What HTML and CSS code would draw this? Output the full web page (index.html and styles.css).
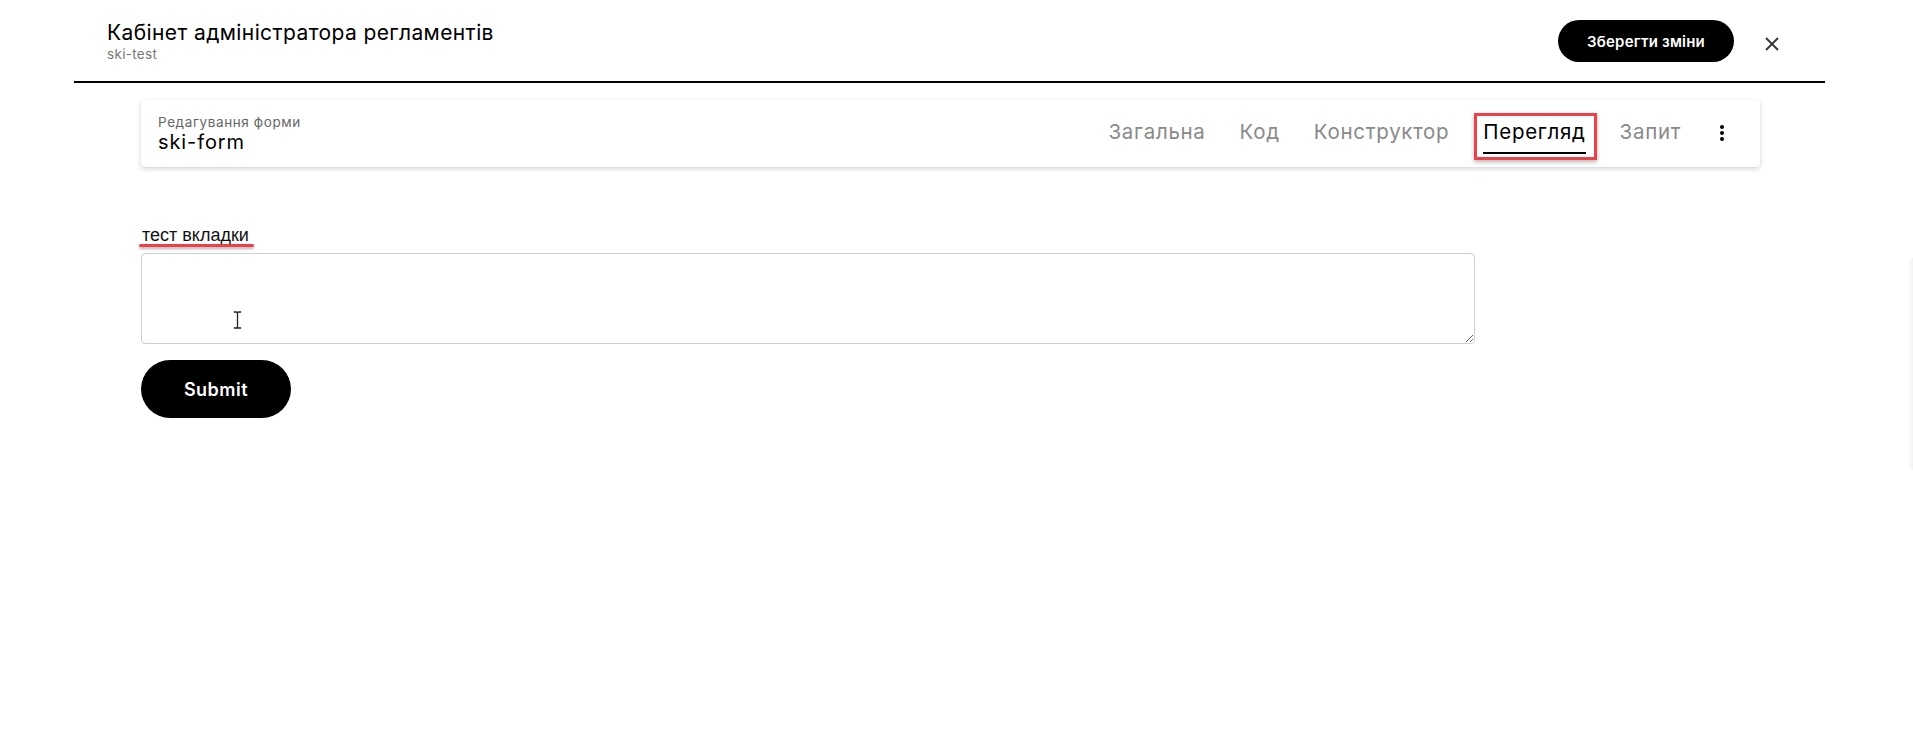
FILE: index.html
```html
<!DOCTYPE html>
<html lang="uk">
<head>
<meta charset="utf-8">
<title>Кабінет адміністратора регламентів</title>
<link rel="stylesheet" href="styles.css">
</head>
<body>
<div class="page">
  <header class="topbar">
    <div class="titles">
      <h1 class="app-title">Кабінет адміністратора регламентів</h1>
      <div class="app-sub">ski-test</div>
    </div>
    <div class="actions">
      <button class="btn-save" type="button">Зберегти зміни</button>
      <button class="btn-close" type="button" aria-label="Закрити">
        <svg width="14" height="14" viewBox="0 0 14 14"><path d="M1 1L13 13M13 1L1 13" stroke="#333" stroke-width="1.8" fill="none"/></svg>
      </button>
    </div>
  </header>

  <main class="main">
    <div class="card">
      <div class="card-titles">
        <div class="card-sub">Редагування форми</div>
        <div class="card-title">ski-form</div>
      </div>
      <nav class="tabs">
        <a class="tab">Загальна</a>
        <a class="tab">Код</a>
        <a class="tab">Конструктор</a>
        <a class="tab active">Перегляд<span class="mark-box"></span></a>
        <a class="tab">Запит</a>
        <button class="kebab" type="button" aria-label="Більше">
          <svg width="4" height="16" viewBox="0 0 4 16"><circle cx="2" cy="2" r="2"/><circle cx="2" cy="8" r="2"/><circle cx="2" cy="14" r="2"/></svg>
        </button>
      </nav>
    </div>

    <form class="form">
      <label class="field-label" for="f1">тест вкладки<span class="mark-line"></span></label>
      <div class="ta-wrap">
        <textarea id="f1" class="field-ta"></textarea>
        <svg class="ibeam" width="9" height="18" viewBox="0 0 9 18"><path d="M0.8 1H3.2Q4.5 1 4.5 2.3V15.7Q4.5 17 3.2 17H0.8M8.2 1H5.8Q4.5 1 4.5 2.3M4.5 15.7Q4.5 17 5.8 17H8.2" stroke="#222" stroke-width="1.3" fill="none"/></svg>
      </div>
      <button class="btn-submit" type="button">Submit</button>
    </form>
  </main>
  <div class="edge-strip"></div>
</div>
</body>
</html>
```

FILE: styles.css
```css
* { box-sizing: border-box; }
html, body { margin: 0; padding: 0; background: #fff; }
body { font-family: Inter, "Noto Sans", sans-serif; color: #000; }

.page { position: relative; width: 1913px; height: 748px; overflow: hidden; }

.topbar {
  display: flex;
  justify-content: space-between;
  align-items: flex-start;
  margin: 0 88px 0 74px;
  height: 83px;
  padding: 20px 41px 0 33px;
  border-bottom: 2px solid #000;
}
.app-title {
  margin: 0;
  font-size: 21px;
  line-height: 26px;
  font-weight: 400;
  letter-spacing: 0.4px;
  color: #000;
}
.app-sub {
  font-size: 13.5px;
  line-height: 16px;
  letter-spacing: 0.3px;
  color: #777;
}
.actions { display: flex; align-items: center; gap: 26px; }
.btn-save {
  height: 42px;
  width: 176px;
  border: 0;
  border-radius: 21px;
  background: #000;
  color: #fff;
  font-family: Inter, sans-serif;
  font-size: 15px;
  font-weight: 600;
  letter-spacing: 0.2px;
  cursor: pointer;
}
.btn-close {
  width: 24px; height: 24px;
  margin-top: 5px;
  padding: 0; border: 0; background: none;
  display: flex; align-items: center; justify-content: center;
}

.main { margin: 17px 153px 0 141px; }

.card {
  display: flex;
  justify-content: space-between;
  align-items: flex-start;
  height: 67px;
  padding: 15px 26px 0 17px;
  background: #fff;
  border-radius: 4px;
  box-shadow: 0 2px 5px rgba(0,0,0,0.16), 0 0 2px rgba(0,0,0,0.06);
}
.card-sub { font-size: 13.5px; line-height: 14px; letter-spacing: 0.6px; color: #666; }
.card-title { font-size: 20px; line-height: 22px; letter-spacing: 0.9px; color: #000; margin-top: 2px; }

.tabs { display: flex; align-items: flex-start; gap: 34px; padding-top: 5px; }
.tab {
  position: relative;
  font-size: 20.5px;
  line-height: 24px;
  letter-spacing: 0.7px;
  color: #8a8a8a;
  padding-bottom: 8px;
  border-bottom: 2px solid transparent;
  cursor: pointer;
}
.tab.active { color: #000; border-bottom-color: #000; }
.kebab {
  width: 24px; height: 24px;
  margin-left: -5px; margin-top: 1px;
  padding: 0; border: 0; background: none;
  display: flex; align-items: center; justify-content: center;
}
.mark-box {
  position: absolute;
  left: -9px; right: -11px; top: -7px; bottom: -8px;
  border: 3px solid #ef3f49;
  box-shadow: 0 2px 4px rgba(0,0,0,0.3);
  pointer-events: none;
}

.form { margin-top: 57px; }
.field-label {
  position: relative;
  display: inline-block;
  font-family: "Liberation Sans", Arial, sans-serif;
  font-size: 18px;
  line-height: 22px;
  color: #111;
  padding-left: 1px;
}
.mark-line {
  position: absolute;
  left: -2px; right: -5px; bottom: -1px;
  height: 3px;
  border-radius: 2px;
  background: #ef3f49;
  box-shadow: 0 2px 3px rgba(0,0,0,0.3);
}
.ta-wrap { position: relative; margin-top: 7px; width: 1334px; }
.field-ta {
  display: block;
  width: 1334px;
  height: 91px;
  border: 1px solid #cfcfcf;
  border-radius: 4px;
  background: #fff;
  font-family: "Liberation Sans", Arial, sans-serif;
  font-size: 16px;
}
.ibeam { position: absolute; left: 92px; top: 58px; }

.btn-submit {
  margin-top: 16px;
  width: 150px;
  height: 58px;
  border: 0;
  border-radius: 29px;
  background: #000;
  color: #fff;
  font-family: Inter, sans-serif;
  font-size: 18px;
  font-weight: 600;
  letter-spacing: 0.5px;
  cursor: pointer;
}

.edge-strip {
  position: absolute;
  right: 0; top: 258px;
  width: 5px; height: 212px;
  background: linear-gradient(to right, rgba(0,0,0,0), rgba(0,0,0,0.05));
}
```
